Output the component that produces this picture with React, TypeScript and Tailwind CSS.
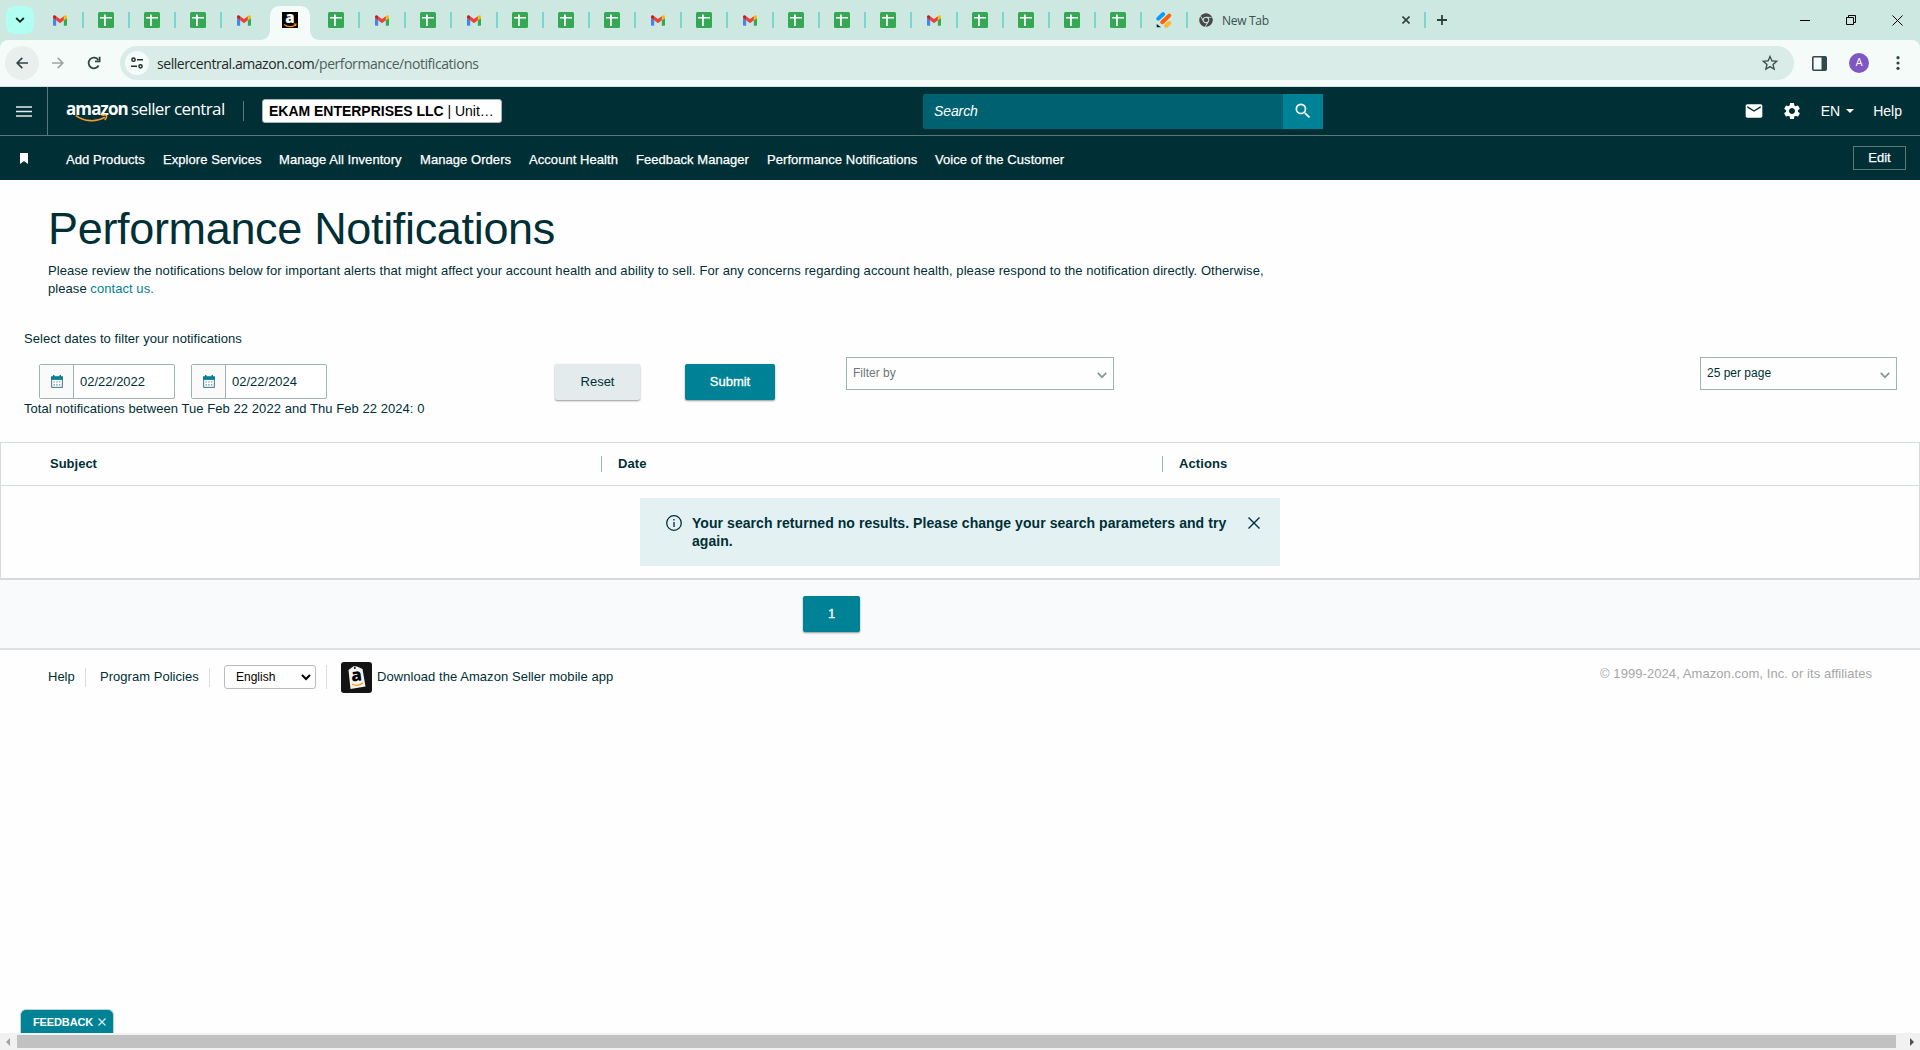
import { ReactNode } from "react";
import clsx from "clsx";
import { MdMail, MdSearch, MdSettings, MdStarOutline } from "react-icons/md";
import { FaChrome } from "react-icons/fa";

type TabKind = "gmail" | "sheets" | "amazon" | "jot";

const tabs: TabKind[] = [
    "gmail", "sheets", "sheets", "sheets", "gmail", "amazon", "sheets", "gmail", "sheets",
    "gmail", "sheets", "sheets", "sheets", "gmail", "sheets", "gmail", "sheets", "sheets",
    "sheets", "gmail", "sheets", "sheets", "sheets", "sheets", "jot",
];

const navLinks = [
    { label: "Add Products", width: "w-[79px]" },
    { label: "Explore Services", width: "w-[98px]" },
    { label: "Manage All Inventory", width: "w-[123px]" },
    { label: "Manage Orders", width: "w-[91px]" },
    { label: "Account Health", width: "w-[89px]" },
    { label: "Feedback Manager", width: "w-[113px]" },
    { label: "Performance Notifications", width: "w-[150px]" },
    { label: "Voice of the Customer", width: "w-[130px]" },
];

function GmailIcon() {
    return (
        <svg viewBox="52 42 88 66" className="h-[11px] w-[14px]">
            <path fill="#4285f4" d="M58 108h14V74L52 59v43c0 3.32 2.69 6 6 6" />
            <path fill="#34a853" d="M120 108h14c3.32 0 6-2.69 6-6V59l-20 15" />
            <path fill="#fbbc04" d="M120 48v26l20-15v-8c0-7.42-8.47-11.65-14.4-7.2" />
            <path fill="#ea4335" d="M72 74V48l24 18 24-18v26L96 92" />
            <path fill="#c5221f" d="M52 51v8l20 15V48l-5.6-4.2c-5.94-4.45-14.4-.22-14.4 7.2" />
        </svg>
    );
}

function SheetsIcon() {
    return (
        <svg viewBox="0 0 16 16" className="size-4">
            <rect width="16" height="16" rx="1.5" fill="#34a853" />
            <path d="M2 5h12v1.600H2zM6 2.500h1.800v11.500H6z" fill="#fff" />
        </svg>
    );
}

function JotIcon() {
    return (
        <svg viewBox="0 0 16 16" className="size-4" strokeWidth="4" strokeLinecap="round">
            <path d="M2.3 6.6 7 2.2" stroke="#0a9bff" />
            <path d="M6.3 10.2 13.2 3.6" stroke="#ff6100" />
            <path d="M10.3 13.8 13.3 11" stroke="#ffb629" />
            <path d="M.7 12v3.3H5z" fill="#0a1551" />
        </svg>
    );
}

function AmazonIcon() {
    return (
        <span className="relative block size-4 bg-black">
            <span className="absolute inset-x-0 top-[-2px] text-center font-['Open_Sans'] text-[15px] leading-[14px] font-extrabold text-white">a</span>
            <svg viewBox="0 0 16 16" className="absolute inset-0" fill="none" stroke="#ff9900" strokeWidth="1.2">
                <path d="M2 12.500c3.500 2.600 8 2.600 11.500.4M11.800 12h2.200l-.6 2" />
            </svg>
        </span>
    );
}

function TabIcon({ kind }: { kind: TabKind }) {
    if (kind === "gmail") return <GmailIcon />;
    if (kind === "sheets") return <SheetsIcon />;
    if (kind === "amazon") return <AmazonIcon />;
    return <JotIcon />;
}

function TabStrip() {
    return (
        <div className="flex h-10 bg-[#cce8e1]">
            <div className="flex w-[37px] items-center pl-1.5">
                <div className="flex size-7 items-center justify-center rounded-[9px] bg-[#b1fff2]">
                    <svg viewBox="0 0 10 10" className="size-[10px]" fill="none" stroke="#06201c" strokeWidth="1.8">
                        <path d="m1.200 3 3.800 3.800L8.800 3" />
                    </svg>
                </div>
            </div>
            {tabs.map((kind, i) => {
                const active = kind === "amazon";
                return (
                    <div key={i} className="relative flex w-[46px] items-center justify-center">
                        {active && (
                            <svg viewBox="0 0 60 34" className="absolute bottom-0 left-[-7px] h-[34px] w-[60px]" fill="#f5fbf9">
                                <path d="M0 34c6 0 10-4 10-10V10C10 4 14 0 20 0h20c6 0 10 4 10 10v14c0 6 4 10 10 10z" />
                            </svg>
                        )}
                        <span className="relative"><TabIcon kind={kind} /></span>
                        {!active && tabs[i + 1] !== "amazon" && (
                            <span className="absolute top-3 -right-px h-4 w-0.5 bg-[#76d9cc]" />
                        )}
                    </div>
                );
            })}
            <div className="relative flex w-[238px] items-center pl-[12px]">
                <FaChrome className="size-[14px] text-[#474747]" />
                <span className="ml-[9px] pt-px font-['Open_Sans'] text-[12px] tracking-[-0.3px] text-[#3c4f4c]">New Tab</span>
                <svg viewBox="0 0 8 8" className="absolute top-4 left-[215px] size-2" stroke="#2c413d" strokeWidth="1.600">
                    <path d="m.5.5 7 7m0-7-7 7" />
                </svg>
                <span className="absolute top-3 -right-px h-4 w-0.5 bg-[#76d9cc]" />
            </div>
            <svg viewBox="0 0 10 10" className="mt-[15px] ml-3 size-[10px]" stroke="#2c413d" strokeWidth="1.800">
                <path d="M5 0v10M0 5h10" />
            </svg>
            <div className="mr-[17px] ml-auto flex items-center gap-9">
                <span className="mt-px h-px w-[10px] bg-black" />
                <svg viewBox="0 0 10 10" className="size-[10px]" fill="none" stroke="#000">
                    <path d="M.5 2.500h7v7h-7zM2.500 2.500v-2h7v7h-2" />
                </svg>
                <svg viewBox="0 0 11 11" className="size-[11px]" stroke="#000">
                    <path d="m.5.5 10 10m0-10-10 10" />
                </svg>
            </div>
        </div>
    );
}

function Toolbar() {
    return (
        <div className="bg-[#cce8e1]">
            <div className="flex h-[47px] items-center rounded-t-lg border-b border-[#d5dfdc] bg-[#f5fbf9] pl-[5px]">
                <div className="flex size-[34px] items-center justify-center rounded-full bg-[#e8efed]">
                    <svg viewBox="0 0 12 12" className="size-3" fill="none" stroke="#2f4642" strokeWidth="1.700">
                        <path d="M12 6H1.200M6.300.8 1.100 6l5.200 5.200" />
                    </svg>
                </div>
                <svg viewBox="0 0 12 12" className="ml-[13px] size-3" fill="none" stroke="#9aa8a5" strokeWidth="1.700">
                    <path d="M0 6h10.800M5.700.8 10.900 6l-5.200 5.200" />
                </svg>
                <svg viewBox="0 0 14 14" className="ml-[23px] size-[14px]" fill="none" stroke="#2f4642" strokeWidth="1.800">
                    <path d="M11.600 9.500A5.300 5.300 0 1 1 11.300 4" />
                    <path d="M12.600.8v4.500H8" />
                </svg>
                <div className="ml-[19px] flex h-[34px] w-[1674px] items-center rounded-full bg-[#daece7] pl-[5px]">
                    <div className="flex size-6 items-center justify-center rounded-full bg-[#f5fbf9]">
                        <svg viewBox="0 0 12 12" className="size-3" fill="none" stroke="#1c302d" strokeWidth="1.500">
                            <circle cx="2.500" cy="2.700" r="1.600" />
                            <path d="M6 2.700h6M0 9.300h6" />
                            <circle cx="9.500" cy="9.300" r="1.600" />
                        </svg>
                    </div>
                    <p className="ml-2 font-['Open_Sans'] text-[14px] tracking-[-0.44px] whitespace-nowrap text-[#1f2a28]">
                        sellercentral.amazon.com<span className="text-[#4e5f5c]">/performance/notifications</span>
                    </p>
                    <MdStarOutline className="mr-[14px] ml-auto size-5 text-[#3f4f4c]" />
                </div>
                <svg viewBox="0 0 15 15" className="ml-[18px] size-[15px]">
                    <rect x=".8" y=".8" width="13.400" height="13.400" rx="1" fill="none" stroke="#2f4a47" strokeWidth="1.600" />
                    <path d="M9.500 1H14v13H9.500z" fill="#2f4a47" />
                </svg>
                <span className="ml-[22px] flex size-5 items-center justify-center rounded-full bg-[#7e57c2] font-['Roboto'] text-[11px] text-white">A</span>
                <svg viewBox="0 0 4 14" className="ml-[27px] h-[14px] w-1" fill="#2f4642">
                    <circle cx="2" cy="1.700" r="1.600" />
                    <circle cx="2" cy="7" r="1.600" />
                    <circle cx="2" cy="12.300" r="1.600" />
                </svg>
            </div>
        </div>
    );
}

function SellerHeader() {
    return (
        <header className="bg-[#002f36] text-white">
            <div className="flex h-[49px] items-center border-b border-[#5c7679]">
                <div className="flex h-full w-12 items-center justify-center border-r border-[#5c7679]">
                    <svg viewBox="0 0 16 11" className="h-[11px] w-4" stroke="#e6eaeb" strokeWidth="1.600">
                        <path d="M0 1h16M0 5.500h16M0 10h16" />
                    </svg>
                </div>
                <div className="relative ml-[18px] flex w-[160px] items-baseline pb-1 font-['Open_Sans'] text-[17px] leading-5 whitespace-nowrap">
                    <span className="w-[65px] font-bold tracking-[-0.9px]">amazon</span>
                    <span className="tracking-[-0.6px]">seller central</span>
                    <svg viewBox="0 0 34 9" className="absolute top-[15px] left-[9px] h-[9px] w-[34px]" fill="none" stroke="#f59a2f" strokeWidth="1.600">
                        <path d="M.8 1.600c9 6.400 20.500 6.500 29 1.700M26.500 1.500c2-.6 4-.8 5 0 .4 1.200-.4 3-1.600 4.500" />
                    </svg>
                </div>
                <span className="ml-[17px] h-5 w-px bg-[#5c7679]" />
                <div className="ml-[18px] flex h-6 w-60 items-center rounded-[3px] border border-[#a8b4b6] bg-white pl-1.5 text-[14px] tracking-[-0.02px] whitespace-nowrap text-black">
                    <p><b>EKAM ENTERPRISES LLC</b> | Unit…</p>
                </div>
                <div className="ml-[421px] flex h-[35px] w-[400px] items-center rounded-[2px] bg-[#006170] pl-[11px]">
                    <span className="text-[14px] tracking-[-0.1px] italic">Search</span>
                    <div className="ml-auto flex h-full w-10 items-center justify-center bg-[#008296]">
                        <MdSearch className="size-5" />
                    </div>
                </div>
                <div className="mr-[18px] ml-auto flex items-center text-[14px]">
                    <MdMail className="size-5" />
                    <MdSettings className="ml-[18px] size-5" />
                    <span className="ml-[19px]">EN</span>
                    <svg viewBox="0 0 8 4" className="ml-1.5 h-1 w-2" fill="#fff"><path d="M0 0h8L4 4z" /></svg>
                    <span className="ml-[19px]">Help</span>
                </div>
            </div>
            <nav className="flex h-11 items-center pl-5 text-[13px] [-webkit-text-stroke:0.25px_white]">
                <svg viewBox="0 0 8 11" className="mr-[38px] h-[11px] w-2" fill="#fff"><path d="M0 0h8v11L4 8l-4 3z" /></svg>
                <div className="flex gap-[18px] pt-1 tracking-[0.06px]">
                    {navLinks.map((link) => (
                        <a key={link.label} className={clsx("whitespace-nowrap", link.width)}>{link.label}</a>
                    ))}
                </div>
                <button className="mr-[14px] ml-auto flex h-6 w-[53px] items-center justify-center border border-[#5c7679]">Edit</button>
            </nav>
        </header>
    );
}

function DateInput({ value }: { value: string }) {
    return (
        <div className="flex h-[35px] w-[136px] rounded-[2px] border border-[#a2b1b2] bg-white">
            <div className="flex w-[34px] items-center justify-center border-r border-[#a2b1b2] bg-[#fafafa] pl-px">
                <svg viewBox="0 0 12 13" className="h-[13px] w-3">
                    <path d="M1 1.200h10a1 1 0 0 1 1 1V12a1 1 0 0 1-1 1H1a1 1 0 0 1-1-1V2.200a1 1 0 0 1 1-1z" fill="#5a8b98" />
                    <path d="M1.200 5h9.600v6.800H1.200z" fill="#fff" />
                    <path d="M0 1.500h12V4.500H0zM2 0h1.500v2H2zM8.500 0H10v2H8.500z" fill="#008296" />
                    <path d="M2.500 7h7M2.500 9.800h7" stroke="#5a8b98" strokeWidth="1.200" strokeDasharray="1.400 1.300" />
                </svg>
            </div>
            <span className="pl-1.5 leading-[33px]">{value}</span>
        </div>
    );
}

function Select({ children, className }: { children: ReactNode; className: string }) {
    return (
        <div className={clsx("flex h-[33px] justify-between border border-[#a2b1b2] pl-1.5 text-[12px] leading-[30px]", className)}>
            <span>{children}</span>
            <svg viewBox="0 0 10 7" className="mt-[14px] mr-1.5 h-[7px] w-[10px]" fill="none" stroke="#879596" strokeWidth="1.800">
                <path d="m.8.8 4.200 4.500L9.200.8" />
            </svg>
        </div>
    );
}

function Filters() {
    return (
        <section className="mt-8 leading-[18px]">
            <p className="pl-6 tracking-[0.06px]">Select dates to filter your notifications</p>
            <div className="mt-[9px] flex h-[43px] items-start pr-[23px] pl-[39px]">
                <div className="mt-[7px] flex gap-4">
                    <DateInput value="02/22/2022" />
                    <DateInput value="02/22/2024" />
                </div>
                <button className="mt-[7px] ml-[228px] h-9 w-[85px] rounded-[2px] bg-[#e3ebec] shadow-[0_1px_2px_rgba(0,0,0,0.4)]">Reset</button>
                <button className="mt-[7px] ml-[45px] h-9 w-[90px] rounded-[2px] bg-[#008296] text-white shadow-[0_1px_2px_rgba(0,0,0,0.4)] [-webkit-text-stroke:0.3px_white]">Submit</button>
                <Select className="ml-[71px] w-[268px] text-[#6c7778]">Filter by</Select>
                <Select className="ml-auto w-[197px]">25 per page</Select>
            </div>
            <p className="pl-6 tracking-[0.06px]">Total notifications between Tue Feb 22 2022 and Thu Feb 22 2024: 0</p>
        </section>
    );
}

function ResultsTable() {
    return (
        <section className="mt-6">
            <div className="h-[138px] border border-b-2 border-[#d5dbdb]">
                <div className="flex h-[43px] items-center border-b border-[#d5dbdb] pb-px font-bold">
                    <span className="w-[600px] pl-[49px]">Subject</span>
                    <span className="flex h-4 w-[561px] items-center border-l border-[#a2b1b2] pl-4 tracking-[0.1px]">Date</span>
                    <span className="flex h-4 items-center border-l border-[#a2b1b2] pl-4 tracking-[0.1px]">Actions</span>
                </div>
                <div className="mx-auto mt-3 flex h-[68px] w-[640px] bg-[#e3f1f3] pt-4 pl-[26px]">
                    <svg viewBox="0 0 16 16" className="mt-px size-4" fill="none" stroke="#002f36" strokeWidth="1.300">
                        <circle cx="8" cy="8" r="7.300" />
                        <path d="M8 7v5M8 4v1.500" />
                    </svg>
                    <p className="ml-[10px] w-[540px] text-[14px] leading-[18px] font-bold tracking-[0.06px] whitespace-nowrap">
                        Your search returned no results. Please change your search parameters and try
                        <br />
                        again.
                    </p>
                    <svg viewBox="0 0 12 12" className="mt-[3px] ml-4 size-3" stroke="#002f36" strokeWidth="1.400">
                        <path d="m.5.5 11 11m0-11-11 11" />
                    </svg>
                </div>
            </div>
            <div className="h-[70px] border-b-2 border-[#dfe2e5] bg-[#f9fafc] pt-4 pl-[803px]">
                <button className="h-9 w-[57px] rounded-[2px] bg-[#008296] text-white shadow-[0_1px_2px_rgba(0,0,0,0.4)] [-webkit-text-stroke:0.3px_white]">1</button>
            </div>
        </section>
    );
}

function PageFooter() {
    return (
        <footer className="flex h-[54px] items-center pr-12 pl-12">
            <a className="w-[27px]">Help</a>
            <span className="ml-[10px] h-[19px] w-px bg-[#dddddd]" />
            <a className="ml-[14px] w-[99px] tracking-[0.03px] whitespace-nowrap">Program Policies</a>
            <span className="ml-[10px] h-[19px] w-px bg-[#dddddd]" />
            <div className="ml-[14px] flex h-6 w-[92px] items-center justify-between rounded-[3px] border border-[#bbbbbb] pr-1 pl-[11px] text-[12px] text-black">
                English
                <svg viewBox="0 0 10 7" className="h-[7px] w-[10px]" fill="none" stroke="#000" strokeWidth="2">
                    <path d="m1 1 4 4 4-4" />
                </svg>
            </div>
            <span className="ml-[10px] h-6 w-px bg-[#dddddd]" />
            <div className="relative mt-px ml-[14px] size-[31px] rounded-[3px] bg-[#141414]">
                <svg viewBox="0 0 31 31" className="absolute inset-0" fill="none">
                    <path d="m7.500 8 5-3.800 3.500.2L21.500 7l3 17.500L9.500 27z" fill="#f4f4f4" />
                    <circle cx="13.800" cy="6" r="1" fill="#141414" />
                    <path d="M11 22c4 2 8 1.500 11-1.200" stroke="#ff9900" strokeWidth="1.300" />
                </svg>
                <span className="absolute top-[4px] left-[10px] rotate-[-6deg] font-['Open_Sans'] text-[17px] leading-[18px] font-extrabold text-black">a</span>
            </div>
            <a className="ml-[5px] tracking-[0.06px]">Download the Amazon Seller mobile app</a>
            <span className="mb-[6px] ml-auto w-[272px] tracking-[0.07px] whitespace-nowrap text-[#a6a6a6]">© 1999-2024, Amazon.com, Inc. or its affiliates</span>
        </footer>
    );
}

function BottomBar() {
    return (
        <div className="mt-auto">
            <div className="ml-5 flex h-6 w-[94px] items-center rounded-t-[6px] border border-b-0 border-[#b9d6da] bg-[#008296] pt-px pl-3 text-[11px] font-bold tracking-[-0.12px] text-white">
                <span className="w-[60px]">FEEDBACK</span>
                <svg viewBox="0 0 8 8" className="ml-[5px] size-2" stroke="#d5ecef" strokeWidth="1.300">
                    <path d="m.5.5 7 7m0-7-7 7" />
                </svg>
            </div>
            <div className="flex h-[17px] items-center bg-[#f1f1f1] pr-1.5 pl-1.5">
                <svg viewBox="0 0 4 8" className="h-2 w-1" fill="#a3a3a3"><path d="M4 0v8L0 4z" /></svg>
                <span className="ml-[7px] h-[13px] w-[1879px] bg-[#c1c1c1]" />
                <svg viewBox="0 0 4 8" className="ml-auto h-2 w-1" fill="#505050"><path d="M0 0v8l4-4z" /></svg>
            </div>
        </div>
    );
}

export default function App() {
    return (
        <div className="flex h-[1050px] w-[1920px] flex-col overflow-hidden bg-[#fefefe] font-['Liberation_Sans',sans-serif] text-[13px] text-[#002f36]">
            <TabStrip />
            <Toolbar />
            <SellerHeader />
            <main>
                <div className="px-12 pt-[21px]">
                    <h1 className="text-[45px] leading-[56px] tracking-[-0.33px]">Performance Notifications</h1>
                    <p className="mt-[5px] leading-[18px] tracking-[0.06px] whitespace-nowrap">
                        Please review the notifications below for important alerts that might affect your account health and ability to sell. For any concerns regarding account health, please respond to the notification directly. Otherwise,
                        <br />
                        please <a className="text-[#008296]">contact us.</a>
                    </p>
                </div>
                <Filters />
                <ResultsTable />
            </main>
            <PageFooter />
            <BottomBar />
        </div>
    );
}
